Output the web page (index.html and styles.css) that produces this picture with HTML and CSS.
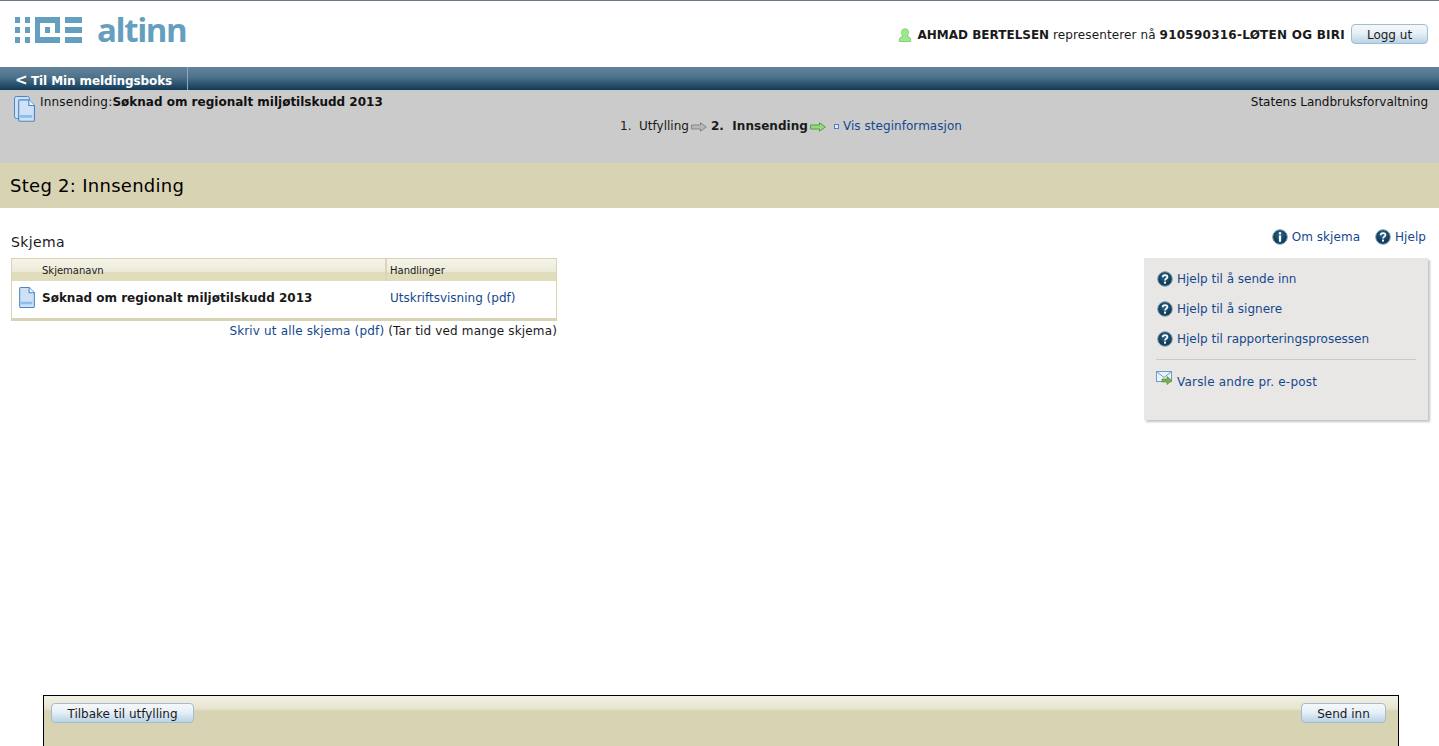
FILE: index.html
```html
<!DOCTYPE html>
<html lang="no">
<head>
    <meta charset="UTF-8">
    <title>Altinn - Innsending</title>
    <link rel="stylesheet" href="styles.css">
</head>
<body>
    <svg class="icon-defs" width="0" height="0">
        <defs>
            <radialGradient id="ball" cx="50%" cy="35%" r="65%">
                <stop offset="0" stop-color="#31688c"/>
                <stop offset="0.7" stop-color="#123c5c"/>
                <stop offset="1" stop-color="#174565"/>
            </radialGradient>
            <symbol id="doc" viewBox="0 0 16 20">
                <path d="M1.5 1.5a1 1 0 0 1 1-1h8l5 5v13a1 1 0 0 1-1 1h-12a1 1 0 0 1-1-1z" fill="#cfe1f6" stroke="#4b86c4"/>
                <path d="M10.5 .5v5h5" fill="#f2f7fd" stroke="#4b86c4"/>
                <rect x="2.500" y="14" width="11" height="2.500" fill="#8fbdea"/>
            </symbol>
            <symbol id="help" viewBox="0 0 16 16">
                <circle cx="8" cy="8" r="7.300" fill="url(#ball)" stroke="#7f9db1" stroke-width="1"/>
                <path d="M5.700 6.300c0-2.900 4.700-2.900 4.700-.2 0 1.700-2.400 1.600-2.400 3.300" fill="none" stroke="#fff" stroke-width="1.800"/>
                <rect x="7" y="10.600" width="2" height="2" fill="#fff"/>
            </symbol>
            <symbol id="info" viewBox="0 0 16 16">
                <circle cx="8" cy="8" r="7.300" fill="url(#ball)" stroke="#7f9db1" stroke-width="1"/>
                <rect x="6.900" y="3.200" width="2.200" height="2.200" fill="#fff"/>
                <rect x="6.900" y="6.400" width="2.200" height="6.400" fill="#fff"/>
            </symbol>
            <symbol id="step-arrow" viewBox="0 0 16 10">
                <path d="M.5 3h9V.8L15.300 5 9.500 9.200V7h-9z"/>
            </symbol>
        </defs>
    </svg>

    <div class="top-line"></div>
    <header class="header">
        <a class="logo">
            <svg class="logo-mark" width="67" height="26" viewBox="0 0 67 26" fill="#659fc0">
                <rect x="0" y="0" width="5" height="6"/><rect x="10" y="0" width="5" height="6"/>
                <rect x="0" y="10" width="5" height="6"/><rect x="10" y="10" width="5" height="6"/>
                <rect x="0" y="20" width="5" height="6"/><rect x="10" y="20" width="5" height="6"/>
                <path d="M20 0h25v16h-5V6h-15v14h20v6h-25z"/>
                <rect x="30" y="10" width="5" height="6"/>
                <rect x="50" y="0" width="17" height="6"/>
                <rect x="50" y="10" width="17" height="6"/>
                <rect x="50" y="20" width="17" height="6"/>
            </svg>
            <span class="logo-text">altinn</span>
        </a>
        <div class="user-info">
            <svg class="user-icon" width="14" height="14" viewBox="0 0 14 14">
                <path d="M3.500 4.500a3.500 3.800 0 0 1 7 0c0 1.800-.8 3-1.600 3.600 2.400.6 3.900 1.700 3.900 5.400h-11.600c0-3.700 1.500-4.800 3.900-5.400-.8-.6-1.600-1.800-1.600-3.600z" fill="#9fe88c" stroke="#6cc35a" stroke-width=".7"/>
            </svg>
            <span class="user-text"><strong>AHMAD BERTELSEN</strong> <span class="represents">representerer nå</span> <strong class="org">910590316-LØTEN OG BIRI</strong></span>
            <button class="btn btn-logout">Logg ut</button>
        </div>
    </header>

    <nav class="nav-bar">
        <a class="nav-back"><span class="nav-arrow">&lt;</span>Til Min meldingsboks</a>
    </nav>

    <section class="form-info">
        <div class="form-title">
            <svg class="title-icon" width="22" height="27" viewBox="0 0 22 27">
                <rect x="0.500" y="0.500" width="15" height="22" rx="2" fill="#cfe1f5" stroke="#4b86c4"/>
                <use href="#doc" x="3" y="3" width="18" height="23"/>
            </svg>
            <span><span class="title-label">Innsending:</span><strong>Søknad om regionalt miljøtilskudd 2013</strong></span>
            <span class="agency">Statens Landbruksforvaltning</span>
        </div>
        <div class="steps">
            <span>1.&nbsp; Utfylling</span>
            <svg class="step-arrow done" width="16" height="10"><use href="#step-arrow"/></svg>
            <strong>2.&nbsp; Innsending</strong>
            <svg class="step-arrow current" width="16" height="10"><use href="#step-arrow"/></svg>
            <a class="step-link"><i class="bullet"></i>Vis steginformasjon</a>
        </div>
    </section>

    <h1 class="step-heading">Steg 2: Innsending</h1>

    <main class="main">
        <div class="forms">
            <h2>Skjema</h2>
            <div class="form-table">
                <div class="table-head">
                    <div class="col-name">Skjemanavn</div>
                    <div class="col-actions">Handlinger</div>
                </div>
                <div class="table-row">
                    <div class="col-name">
                        <svg class="row-icon" width="17" height="21"><use href="#doc" width="17" height="21"/></svg>
                        <strong>Søknad om regionalt miljøtilskudd 2013</strong>
                    </div>
                    <div class="col-actions"><a>Utskriftsvisning (pdf)</a></div>
                </div>
            </div>
            <div class="print-all"><a>Skriv ut alle skjema (pdf)</a> (Tar tid ved mange skjema)</div>
        </div>

        <aside class="side">
            <div class="side-links">
                <a><svg width="16" height="16"><use href="#info"/></svg>Om skjema</a>
                <a><svg width="16" height="16"><use href="#help"/></svg>Hjelp</a>
            </div>
            <div class="help-box">
                <a><svg width="16" height="16"><use href="#help"/></svg>Hjelp til å sende inn</a>
                <a><svg width="16" height="16"><use href="#help"/></svg>Hjelp til å signere</a>
                <a><svg width="16" height="16"><use href="#help"/></svg>Hjelp til rapporteringsprosessen</a>
                <hr>
                <a class="notify">
                    <svg width="17" height="15" viewBox="0 0 17 15">
                        <rect x="0.500" y="0.500" width="15" height="10" fill="#eaf3fb" stroke="#6c9cc8"/>
                        <path d="M.5.5l7.500 6 7.500-6" fill="none" stroke="#6c9cc8"/>
                        <path d="M6 8h5V5.500l5 4-5 4V11H6z" fill="#79b04f" stroke="#4d8530" stroke-width=".6"/>
                    </svg>Varsle andre pr. e-post
                </a>
            </div>
        </aside>
    </main>

    <footer class="footer">
        <button class="btn btn-back">Tilbake til utfylling</button>
        <button class="btn btn-send">Send inn</button>
    </footer>
</body>
</html>
```

FILE: styles.css
```css
html, body {
    height: 746px;
    margin: 0;
    overflow: hidden;
}

body {
    display: flex;
    flex-direction: column;
    font-family: "DejaVu Sans", Verdana, sans-serif;
    font-size: 12px;
    color: #1a1a1a;
    background: #fff;
}

a {
    color: #15478f;
    text-decoration: none;
}

.icon-defs {
    position: absolute;
}

.top-line {
    height: 1px;
    background: #6d7a8a;
}

/* Header */
.header {
    height: 66px;
    display: flex;
    justify-content: space-between;
    padding: 0 11px 0 15px;
}

.logo {
    display: flex;
    align-items: flex-start;
    padding-top: 16px;
}

.logo-text {
    font-family: "Open Sans", sans-serif;
    font-size: 33px;
    font-weight: 700;
    line-height: 30px;
    color: #659fc0;
    margin: -2px 0 0 15px;
    letter-spacing: -1.4px;
}

.user-info {
    display: flex;
    align-items: center;
    gap: 5px;
    height: 20px;
    margin-top: 23px;
}

.user-icon {
    margin: 2px 1px 0 0;
}

.user-text {
    padding-top: 2px;
}

.represents {
    letter-spacing: .12px;
}

.org {
    letter-spacing: .25px;
}

.btn {
    font-family: "DejaVu Sans", Verdana, sans-serif;
    font-size: 12px;
    color: #1a1a1a;
    height: 20px;
    padding: 1px 0 0;
    border: 1px solid #a3bdd0;
    border-radius: 4px;
    background: linear-gradient(to bottom, #f4f8fb 0%, #e8f0f6 45%, #b8d3e8 100%);
}

.btn-logout {
    width: 77px;
    margin-left: 1px;
}

/* Nav */
.nav-bar {
    height: 23px;
    display: flex;
    background: linear-gradient(to bottom, #648299 0%, #50758e 40%, #113a58 100%);
}

.nav-back {
    display: flex;
    align-items: center;
    width: 172px;
    padding: 4px 0 0 15px;
    box-sizing: content-box;
    border-right: 1px solid #8fa6b6;
    color: #fff;
    font-weight: bold;
    letter-spacing: -.1px;
    height: 19px;
}

.nav-arrow {
    width: 16px;
    font-size: 15px;
    line-height: 15px;
}

/* Form info */
.form-info {
    height: 73px;
    background: #cbcbcb;
}

.form-title {
    display: flex;
    gap: 4px;
    padding: 5px 11px 0 14px;
    line-height: 15px;
    color: #111;
}

.title-label {
    letter-spacing: .2px;
}

.title-icon {
    flex: none;
    margin-top: 1px;
}

.agency {
    margin-left: auto;
}

.steps {
    display: flex;
    align-items: center;
    gap: 2px;
    margin: -4px 0 0 620px;
    line-height: 15px;
}

.steps strong {
    margin-left: 2px;
    letter-spacing: .04px;
}

.step-arrow {
    margin-top: 1px;
}

.step-arrow.done {
    fill: #b8b8b8;
    stroke: #868686;
}

.step-arrow.current {
    fill: #93da7e;
    stroke: #55a045;
}

.step-link {
    margin-left: 6px;
    margin-top: -1px;
    letter-spacing: .05px;
}

.bullet {
    display: inline-block;
    width: 3px;
    height: 3px;
    margin: 0 4px 1px 0;
    border: 1px solid #4a7fd0;
    background: #e6eefb;
}

.step-heading {
    height: 45px;
    margin: 0;
    padding-left: 10px;
    font-size: 18px;
    font-weight: normal;
    letter-spacing: .28px;
    line-height: 45px;
    color: #000;
    background: #d8d3b3;
}

/* Main */
.main {
    display: flex;
    justify-content: space-between;
    padding: 18px 11px 0;
}

.forms {
    width: 546px;
}

.forms h2 {
    margin: 8px 0 8px;
    font-size: 14px;
    font-weight: normal;
    letter-spacing: .35px;
    line-height: 16px;
}

.form-table {
    border: 1px solid #d8d3b3;
    border-bottom: 3px solid #d8d3b3;
    height: 59px;
}

.table-head {
    display: flex;
    height: 22px;
    font-size: 10px;
    line-height: 23px;
    background: linear-gradient(to bottom, #f7f5ea 0%, #ecead6 60%, #e1dcbb 60%, #e1dcbb 100%);
}

.col-name {
    box-sizing: border-box;
    width: 375px;
    flex: none;
}

.table-head .col-name {
    padding-left: 30px;
    border-right: 2px solid #dad6ba;
}

.table-head .col-actions {
    padding-left: 3px;
}

.table-row {
    display: flex;
    align-items: center;
    box-sizing: border-box;
    height: 32px;
    padding-top: 2px;
}

.table-row .col-name {
    display: flex;
    align-items: center;
    gap: 7px;
    padding-left: 6px;
}

.table-row .col-actions {
    padding-left: 3px;
}

.row-icon {
    margin-top: -2px;
}

.print-all {
    text-align: right;
    margin-top: 2px;
    letter-spacing: .16px;
    line-height: 16px;
}

/* Right side */
.side {
    width: 284px;
}

.side-links {
    display: flex;
    justify-content: flex-end;
    gap: 15px;
    height: 32px;
    padding-right: 2px;
}

.side-links a {
    display: flex;
    align-items: center;
    gap: 4px;
    height: 22px;
    letter-spacing: .05px;
}

.help-box {
    box-sizing: border-box;
    height: 162px;
    padding: 13px 12px 0 12px;
    background: #e9e7e5;
    box-shadow: 2px 2px 2px #c4c4c4;
}

.help-box a {
    display: flex;
    align-items: center;
    gap: 4px;
    height: 16px;
    margin-bottom: 14px;
    padding-left: 1px;
}

.help-box hr {
    margin: -2px 0 14px;
    border: 0;
    border-top: 1px solid #cbcbcb;
}

.help-box .notify {
    letter-spacing: .2px;
}

.notify svg {
    margin: -7px 0 0 -1px;
}

/* Footer */
.footer {
    display: flex;
    justify-content: space-between;
    box-sizing: border-box;
    height: 51px;
    margin: auto 40px 0 43px;
    padding: 7px 12px 0 7px;
    border: 1px solid #000;
    border-bottom: 0;
    background: linear-gradient(to bottom, #f3f1e6 0, #e6e3cd 13px, #d8d3b3 15px, #d8d3b3 100%);
}

.btn-back {
    width: 143px;
}

.btn-send {
    width: 85px;
}
```
